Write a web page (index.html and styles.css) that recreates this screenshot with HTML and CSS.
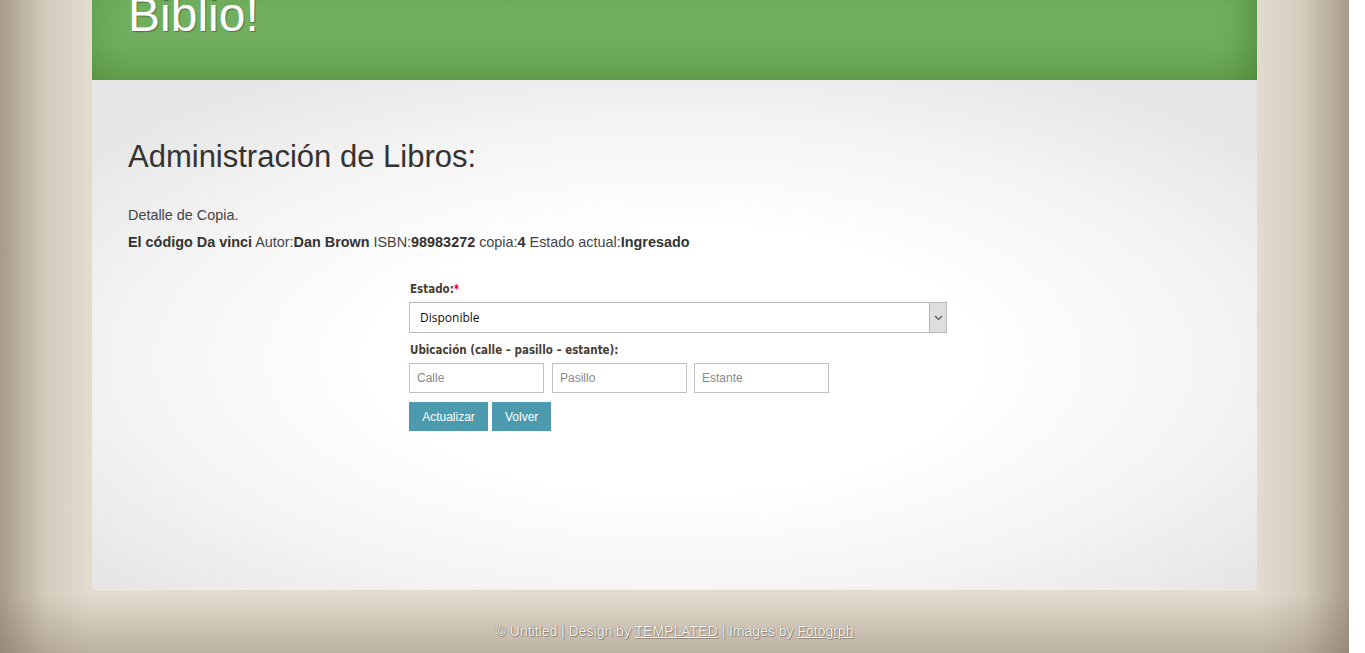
FILE: index.html
```html
<!DOCTYPE html>
<html lang="es">
<head>
<meta charset="utf-8">
<title>Biblio!</title>
<link rel="stylesheet" href="styles.css">
</head>
<body>
<div class="page">
  <header class="top">
    <h1 class="logo">Biblio!</h1>
  </header>
  <main class="panel">
    <h2 class="title">Administración de Libros:</h2>
    <p class="sub">Detalle de Copia.</p>
    <p class="info"><b>El código Da vinci</b> Autor:<b>Dan Brown</b> ISBN:<b>98983272</b> copia:<b>4</b> Estado actual:<b>Ingresado</b></p>
    <form class="form">
      <label class="lbl">Estado:<span class="req">*</span></label>
      <div class="select">
        <span class="select-val">Disponible</span>
        <span class="select-btn"><svg width="9" height="6" viewBox="0 0 9 6"><path d="M1 1 L4.5 4.5 L8 1" fill="none" stroke="#555" stroke-width="1.2"/></svg></span>
      </div>
      <label class="lbl lbl2">Ubicación (calle – pasillo – estante):</label>
      <div class="inputs">
        <input class="field" type="text" placeholder="Calle">
        <input class="field f2" type="text" placeholder="Pasillo">
        <input class="field f3" type="text" placeholder="Estante">
      </div>
      <div class="buttons">
        <button type="button" class="btn">Actualizar</button>
        <button type="button" class="btn">Volver</button>
      </div>
    </form>
  </main>
  <footer class="foot">© Untitled | Design by <a href="#">TEMPLATED</a> | Images by <a href="#">Fotogrph</a></footer>
</div>
</body>
</html>
```

FILE: styles.css
```css
html {
  background: #fff;
}
body {
  margin: 0;
  width: 1349px;
  height: 653px;
  overflow: hidden;
  font-family: "Liberation Sans", Arial, sans-serif;
  background:
    linear-gradient(to right, rgba(125, 110, 92, 0.6) 0, rgba(125, 110, 92, 0.15) 45px, rgba(125, 110, 92, 0) 90px, rgba(125, 110, 92, 0) 1259px, rgba(125, 110, 92, 0.15) 1304px, rgba(125, 110, 92, 0.6) 1349px),
    linear-gradient(to bottom, rgba(125, 110, 92, 0) 0, rgba(125, 110, 92, 0) 595px, rgba(125, 110, 92, 0.38) 653px),
    #e3dbce;
}
.page {
  display: flex;
  flex-direction: column;
  align-items: center;
}
.top {
  width: 1165px;
  height: 80px;
  box-sizing: border-box;
  padding-left: 36px;
  overflow: hidden;
  background: linear-gradient(to bottom, #72b060 0%, #70ae5d 55%, #639f4c 100%);
  box-shadow: inset -30px 0 30px -20px rgba(40, 90, 20, 0.35), inset 30px 0 30px -25px rgba(40, 90, 20, 0.2);
}
.logo {
  margin: -9px 0 0;
  font-size: 48px;
  line-height: 48px;
  font-weight: normal;
  color: #fff;
  text-shadow: 1px 1px 1px rgba(0, 0, 0, 0.35);
}
.panel {
  width: 1165px;
  height: 509px;
  box-sizing: border-box;
  padding: 57px 36px 0;
  border-radius: 0 0 5px 5px;
  background: radial-gradient(ellipse 65% 65% at 50% 55%, #ffffff 40%, #f4f4f4 72%, #e6e6e6 100%);
  box-shadow: 0 1px 0 rgba(255, 255, 255, 0.6);
  color: #444;
}
.title {
  margin: 0;
  font-size: 31px;
  line-height: 40px;
  font-weight: normal;
  color: #333;
}
.sub, .info {
  margin: 0;
  font-size: 14.4px;
  line-height: 27px;
}
.sub {
  margin-top: 25px;
}
.info b {
  color: #333;
}
.form {
  margin: 25px 0 0 281px;
  width: 538px;
  display: flex;
  flex-direction: column;
}
.lbl {
  font-family: "DejaVu Sans Condensed", "DejaVu Sans", sans-serif;
  font-weight: bold;
  font-size: 11.5px;
  line-height: 16px;
  color: #473d33;
  padding-left: 1px;
}
.req {
  color: #e0001a;
}
.select {
  margin-top: 5px;
  height: 31px;
  box-sizing: border-box;
  border: 1px solid #b9b9b9;
  background: #fff;
  display: flex;
  align-items: center;
  justify-content: space-between;
}
.select-val {
  padding-left: 10px;
  font-family: "Open Sans", sans-serif;
  font-size: 12px;
  color: #111;
}
.select-btn {
  width: 17px;
  height: 100%;
  box-sizing: border-box;
  border-left: 1px solid #b5b5b5;
  background: #dedede;
  display: flex;
  align-items: center;
  justify-content: center;
}
.lbl2 {
  margin-top: 9px;
}
.inputs {
  margin-top: 5px;
  display: flex;
}
.field {
  width: 135px;
  height: 30px;
  box-sizing: border-box;
  margin: 0;
  border: 1px solid #c2c2c2;
  padding: 0 7px;
  font-family: "Liberation Sans", Arial, sans-serif;
  font-size: 12px;
  background: #fff;
  outline: none;
}
.field::placeholder {
  color: #8a8a8a;
}
.f2 {
  margin-left: 8px;
}
.f3 {
  margin-left: 7px;
}
.buttons {
  margin-top: 9px;
  display: flex;
  gap: 4px;
}
.btn {
  height: 29px;
  margin: 0;
  border: none;
  padding: 0 13px;
  background: #4b9aae;
  color: #fff;
  font-family: "Liberation Sans", Arial, sans-serif;
  font-size: 12px;
  cursor: pointer;
}
.btn:first-child {
  width: 79px;
}
.btn:last-child {
  width: 59px;
}
.foot {
  margin-top: 32px;
  font-size: 14px;
  line-height: 20px;
  color: #f6f3ee;
  text-shadow: 0 0 1px rgba(60, 50, 40, 0.7), 1px 1px 1px rgba(60, 50, 40, 0.35);
}
.foot a {
  color: #f6f3ee;
}
```
